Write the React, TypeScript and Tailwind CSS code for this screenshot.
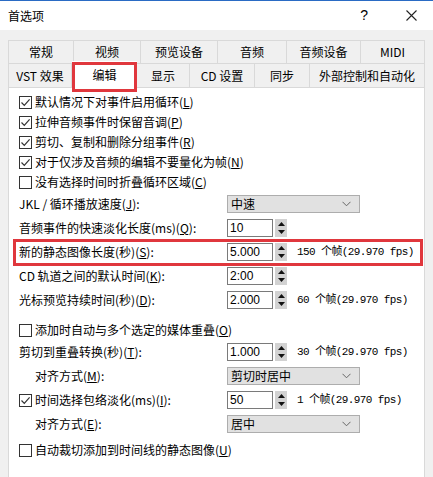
import React from "react"

const cjk = '"Noto Sans CJK SC", "Noto Sans", sans-serif'
const mono = '"Liberation Mono", "Noto Sans CJK SC", monospace'

function Check({ on }: { on?: boolean }) {
  return (
    <span className="w-[13px] h-[13px] border border-[#333333] bg-white flex items-center justify-center shrink-0">
      {on && (
        <svg width="11" height="11" viewBox="0 0 11 11">
          <path d="M1.5 5.5 L4.3 8.3 L9.6 2.4" fill="none" stroke="#333" strokeWidth="1.2" />
        </svg>
      )}
    </span>
  )
}

function Label({ text, k, tail = "" }: { text: string; k: string; tail?: string }) {
  return (
    <span className="whitespace-nowrap">
      {text}(<u>{k}</u>){tail}
    </span>
  )
}

function Select({ value }: { value: string }) {
  return (
    <div className="w-[133px] h-[18px] bg-[#e1e1e1] border border-[#adadad] flex items-center justify-between pl-[3px] pr-[8px] text-[12px]">
      <span>{value}</span>
      <svg width="9" height="6" viewBox="0 0 9 6">
        <path d="M0.5 0.8 L4.5 4.8 L8.5 0.8" fill="none" stroke="#666" strokeWidth="1" />
      </svg>
    </div>
  )
}

function Spin({ value, info }: { value: string; info?: string }) {
  return (
    <div className="flex items-center">
      <div
        className="w-[46px] h-[18px] bg-white border border-[#7a7a7a] flex items-center pl-[2px] text-[12px]"
        style={{ fontFamily: '"Liberation Sans", sans-serif' }}
      >
        {value}
      </div>
      <div className="ml-[2px] w-[12px] h-[18px] bg-[#d2d2d2] flex flex-col items-center justify-between py-[3px]">
        <svg width="7" height="4" viewBox="0 0 7 4">
          <path d="M0 4 L3.5 0 L7 4 Z" fill="#111" />
        </svg>
        <svg width="7" height="4" viewBox="0 0 7 4">
          <path d="M0 0 L3.5 4 L7 0 Z" fill="#111" />
        </svg>
      </div>
      {info && (
        <span className="ml-[10px] text-[11px] tracking-[-0.6px] whitespace-nowrap" style={{ fontFamily: mono }}>
          {info}
        </span>
      )}
    </div>
  )
}

const row1 = [
  { t: "常规", w: "w-[66px]" },
  { t: "视频", w: "w-[67px]" },
  { t: "预览设备", w: "w-[77px]" },
  { t: "音频", w: "w-[69px]" },
  { t: "音频设备", w: "w-[74px]" },
  { t: "MIDI", w: "w-[64px]" },
]

const row2 = [
  { t: "VST 效果", w: "w-[64px]" },
  { t: "编辑", w: "w-[65px]", on: true },
  { t: "显示", w: "w-[53px]" },
  { t: "CD 设置", w: "w-[65px]" },
  { t: "同步", w: "w-[55px]" },
  { t: "外部控制和自动化", w: "w-[115px]" },
]

export default function App() {
  return (
    <div
      className="w-[433px] h-[477px] bg-[#f0f0f0] overflow-hidden text-[#000] text-[12px]"
      style={{ fontFamily: cjk }}
    >
      {/* Title bar */}
      <div className="h-[30px] bg-white border-t border-[#2a6bc4] flex items-center pl-[8px] pr-[16px]">
        <span className="text-[12px]">首选项</span>
        <span className="ml-auto mr-[38px] text-[14px]" style={{ fontFamily: '"Liberation Sans", sans-serif' }}>?</span>
        <svg width="11" height="11" viewBox="0 0 11 11">
          <path d="M0.5 0.5 L10.5 10.5 M10.5 0.5 L0.5 10.5" stroke="#222" strokeWidth="1.1" />
        </svg>
      </div>

      {/* Tabs */}
      <div className="pt-[10px] px-[8px]">
        <div className="flex h-[23px]">
          {row1.map((t) => (
            <div
              key={t.t}
              className={`${t.w} h-full border-t border-r border-[#d9d9d9] first:border-l flex items-center justify-center text-[12px]`}
            >
              {t.t}
            </div>
          ))}
        </div>
        <div className="flex h-[24px]">
          {row2.map((t) =>
            t.on ? (
              <div key={t.t} className={`${t.w} relative -mt-[2px] h-[27px] bg-white z-10 flex items-center justify-center`}>
                {t.t}
                <span className="absolute left-0 right-0 top-[1px] -bottom-[4px] border-[3px] border-[#e0373d]" />
              </div>
            ) : (
              <div
                key={t.t}
                className={`${t.w} h-full border-t border-r border-[#d9d9d9] first:border-l flex items-center justify-center`}
              >
                {t.t}
              </div>
            ),
          )}
        </div>

        {/* Pane */}
        <div className="w-[417px] h-[400px] bg-white border border-[#d9d9d9] pt-[4px]">
          {[
            { t: "默认情况下对事件启用循环", k: "L", on: true },
            { t: "拉伸音频事件时保留音调", k: "P", on: true },
            { t: "剪切、复制和删除分组事件", k: "R", on: true },
            { t: "对于仅涉及音频的编辑不要量化为帧", k: "N", on: true },
            { t: "没有选择时间时折叠循环区域", k: "C", on: false },
          ].map((c) => (
            <div key={c.k} className="h-[20px] pl-[10px] flex items-center gap-[3px]">
              <Check on={c.on} />
              <Label text={c.t} k={c.k} />
            </div>
          ))}

          <div className="h-[24px] pl-[10px] flex items-center">
            <div className="w-[208px]">
              <Label text="JKL / 循环播放速度" k="J" tail=":" />
            </div>
            <Select value="中速" />
          </div>
          <div className="h-[24px] pl-[10px] flex items-center">
            <div className="w-[208px]">
              <Label text="音频事件的快速淡化长度(ms)" k="Q" tail=":" />
            </div>
            <Spin value="10" />
          </div>
          <div className="h-[24px] pl-[10px] flex items-center relative">
            <span className="absolute left-[4px] right-[1px] -top-[1px] -bottom-[2px] border-[3px] border-[#e0373d]" />
            <div className="w-[208px]">
              <Label text="新的静态图像长度(秒)" k="S" tail=":" />
            </div>
            <Spin value="5.000" info="150 个帧(29.970 fps)" />
          </div>
          <div className="h-[24px] pl-[10px] flex items-center">
            <div className="w-[208px]">
              <Label text="CD 轨道之间的默认时间" k="K" tail=":" />
            </div>
            <Spin value="2:00" />
          </div>
          <div className="h-[24px] pl-[10px] flex items-center">
            <div className="w-[208px]">
              <Label text="光标预览持续时间(秒)" k="D" tail=":" />
            </div>
            <Spin value="2.000" info="60 个帧(29.970 fps)" />
          </div>

          <div className="mt-[8px] h-[20px] pl-[10px] flex items-center gap-[3px]">
            <Check />
            <Label text="添加时自动与多个选定的媒体重叠" k="O" />
          </div>
          <div className="h-[24px] pl-[10px] flex items-center">
            <div className="w-[208px]">
              <Label text="剪切到重叠转换(秒)" k="T" tail=":" />
            </div>
            <Spin value="1.000" info="30 个帧(29.970 fps)" />
          </div>
          <div className="h-[24px] pl-[10px] flex items-center">
            <div className="w-[208px] pl-[16px]">
              <Label text="对齐方式" k="M" tail=":" />
            </div>
            <Select value="剪切时居中" />
          </div>
          <div className="h-[24px] pl-[10px] flex items-center">
            <div className="w-[208px] flex items-center gap-[3px]">
              <Check on />
              <Label text="时间选择包络淡化(ms)" k="I" tail=":" />
            </div>
            <Spin value="50" info="1 个帧(29.970 fps)" />
          </div>
          <div className="h-[24px] pl-[10px] flex items-center">
            <div className="w-[208px] pl-[16px]">
              <Label text="对齐方式" k="E" tail=":" />
            </div>
            <Select value="居中" />
          </div>
          <div className="mt-[2px] h-[24px] pl-[10px] flex items-center gap-[3px]">
            <Check />
            <Label text="自动裁切添加到时间线的静态图像" k="U" />
          </div>
        </div>
      </div>
    </div>
  )
}
